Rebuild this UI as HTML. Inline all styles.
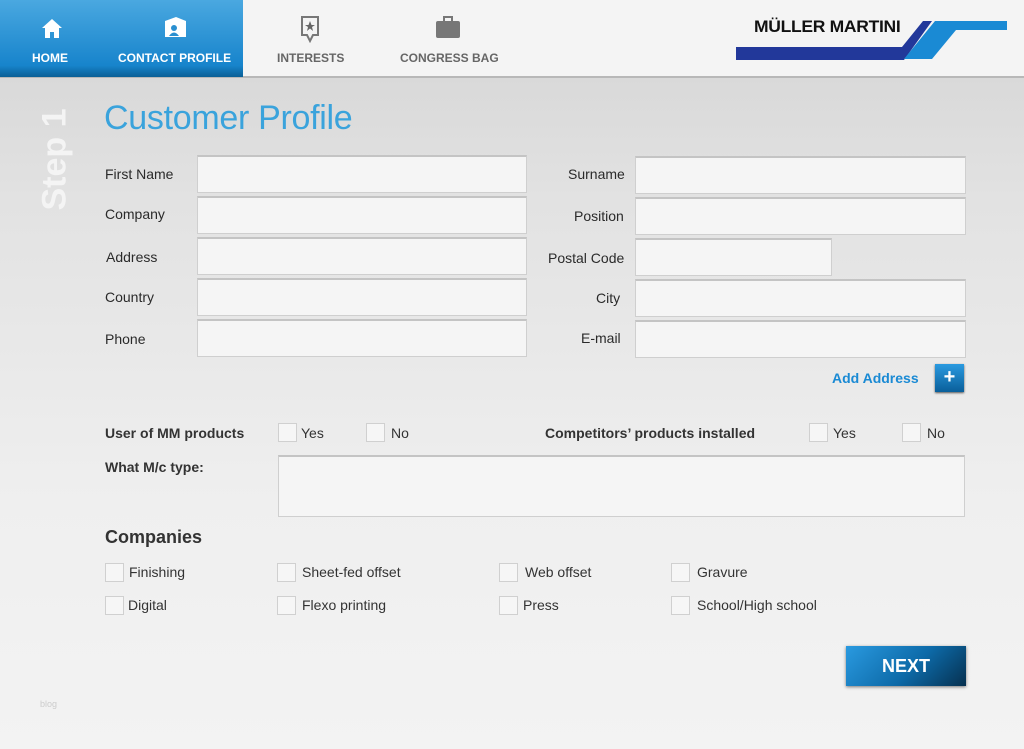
<!DOCTYPE html>
<html><head><meta charset="utf-8"><style>
*{margin:0;padding:0;box-sizing:border-box}
body{width:1024px;height:749px;overflow:hidden;font-family:"Liberation Sans",sans-serif;background:linear-gradient(#d9d9d9 78px,#e2e2e2 200px,#efefef 500px,#f3f3f3);position:relative;color:#222}
.hdr{position:absolute;left:0;top:0;width:1024px;height:78px;background:#f4f4f4;border-bottom:2px solid #b8b8b8}
.blue{position:absolute;left:0;top:0;width:243px;height:77px;background:linear-gradient(#4aa8e0,#1784cc 85%,#0a5f96)}
.tab{position:absolute;top:51px;font-size:12px;font-weight:bold;text-align:center}
.w{color:#fff}.g{color:#666}
.a{position:absolute}
.lbl{position:absolute;font-size:14px;color:#2a2a2a}
.in{position:absolute;background:#f5f5f5;border:1px solid #cfcfcf;border-top:2px solid #c4c4c4;height:38px}
.cb{position:absolute;width:19px;height:19px;background:#f6f6f6;border:1px solid #d0d0d0}
.t{position:absolute;font-size:14px;color:#333}
.b{font-weight:bold}
</style></head><body>
<div class="hdr"></div>
<div class="blue"></div>
<svg class="a" style="left:40px;top:16px" width="24" height="24" viewBox="0 0 24 24"><path d="M2 12L12 3L22 12H19V22H14V16H10V22H5V12Z" fill="#fff"/></svg>
<div class="tab w" style="left:32px">HOME</div>
<svg class="a" style="left:162px;top:15px" width="26" height="26" viewBox="0 0 26 26"><path d="M3 6L14 2L24 6V22H3Z" fill="#fff"/><circle cx="12" cy="13" r="3" fill="#2a8fd0"/><path d="M7 21Q12 14 17 21Z" fill="#2a8fd0"/></svg>
<div class="tab w" style="left:118px">CONTACT PROFILE</div>
<svg class="a" style="left:300px;top:15px" width="20" height="28" viewBox="0 0 20 28"><path d="M2 2H18V20H13L10 26L7 20H2Z" fill="none" stroke="#777" stroke-width="2"/><path d="M10 6L11.5 10H15L12 12L13 16L10 13.5L7 16L8 12L5 10H8.5Z" fill="#666"/></svg>
<div class="tab g" style="left:277px">INTERESTS</div>
<svg class="a" style="left:435px;top:16px" width="26" height="24" viewBox="0 0 26 24"><rect x="1" y="5" width="24" height="17" rx="2" fill="#777"/><rect x="9" y="1" width="8" height="5" fill="none" stroke="#777" stroke-width="2"/></svg>
<div class="tab g" style="left:400px">CONGRESS BAG</div>
<div class="a b" style="left:754px;top:17px;font-size:17px;color:#111;letter-spacing:-0.3px;transform:scaleX(1.03);transform-origin:left">MÜLLER MARTINI</div>
<svg class="a" style="left:736px;top:20px" width="272" height="40" viewBox="0 0 272 40"><path d="M0 27H166L187 1H196L168 40H0Z" fill="#22389a"/><path d="M199 1H271V10H220L196 39H168Z" fill="#1a8ad4"/></svg>
<div class="a b" style="left:25px;top:100px;width:50px;height:120px">
<div style="position:absolute;left:-30px;top:40px;width:120px;transform:rotate(-90deg);font-size:34px;color:#f4f4f4;text-align:center">Step 1</div></div>
<div class="a" style="left:104px;top:99px;font-size:34px;color:#3aa3dc;letter-spacing:-0.3px">Customer Profile</div>
<div class="lbl" style="left:105px;top:166px">First Name</div>
<div class="lbl" style="left:105px;top:206px">Company</div>
<div class="lbl" style="left:106px;top:249px">Address</div>
<div class="lbl" style="left:105px;top:289px">Country</div>
<div class="lbl" style="left:105px;top:331px">Phone</div>
<div class="in" style="left:197px;top:155px;width:330px"></div>
<div class="in" style="left:197px;top:196px;width:330px"></div>
<div class="in" style="left:197px;top:237px;width:330px"></div>
<div class="in" style="left:197px;top:278px;width:330px"></div>
<div class="in" style="left:197px;top:319px;width:330px"></div>
<div class="lbl" style="left:568px;top:166px">Surname</div>
<div class="lbl" style="left:574px;top:208px">Position</div>
<div class="lbl" style="left:548px;top:250px">Postal Code</div>
<div class="lbl" style="left:596px;top:290px">City</div>
<div class="lbl" style="left:581px;top:330px">E-mail</div>
<div class="in" style="left:635px;top:156px;width:331px"></div>
<div class="in" style="left:635px;top:197px;width:331px"></div>
<div class="in" style="left:635px;top:238px;width:197px"></div>
<div class="in" style="left:635px;top:279px;width:331px"></div>
<div class="in" style="left:635px;top:320px;width:331px"></div>
<div class="a b" style="left:832px;top:370px;font-size:14px;color:#1a8ad4">Add Address</div>
<div class="a" style="left:935px;top:364px;width:29px;height:28px;background:linear-gradient(#2a9ae0,#0a5f9a);box-shadow:0 1px 2px #555;color:#fff;font-weight:bold;font-size:20px;text-align:center;line-height:27px">+</div>
<div class="t b" style="left:105px;top:425px">User of MM products</div>
<div class="cb" style="left:278px;top:423px"></div><div class="t" style="left:301px;top:425px">Yes</div>
<div class="cb" style="left:366px;top:423px"></div><div class="t" style="left:391px;top:425px">No</div>
<div class="t b" style="left:545px;top:425px">Competitors’ products installed</div>
<div class="cb" style="left:809px;top:423px"></div><div class="t" style="left:833px;top:425px">Yes</div>
<div class="cb" style="left:902px;top:423px"></div><div class="t" style="left:927px;top:425px">No</div>
<div class="t b" style="left:105px;top:459px">What M/c type:</div>
<div class="in" style="left:278px;top:455px;width:687px;height:62px"></div>
<div class="a b" style="left:105px;top:527px;font-size:18px;color:#333">Companies</div>
<div class="cb" style="left:105px;top:563px"></div><div class="t" style="left:129px;top:564px">Finishing</div>
<div class="cb" style="left:277px;top:563px"></div><div class="t" style="left:302px;top:564px">Sheet-fed offset</div>
<div class="cb" style="left:499px;top:563px"></div><div class="t" style="left:525px;top:564px">Web offset</div>
<div class="cb" style="left:671px;top:563px"></div><div class="t" style="left:697px;top:564px">Gravure</div>
<div class="cb" style="left:105px;top:596px"></div><div class="t" style="left:128px;top:597px">Digital</div>
<div class="cb" style="left:277px;top:596px"></div><div class="t" style="left:302px;top:597px">Flexo printing</div>
<div class="cb" style="left:499px;top:596px"></div><div class="t" style="left:523px;top:597px">Press</div>
<div class="cb" style="left:671px;top:596px"></div><div class="t" style="left:697px;top:597px">School/High school</div>
<div class="a b" style="left:846px;top:646px;width:120px;height:40px;background:linear-gradient(135deg,#2a9ae0,#0d6aa8 55%,#06304f);box-shadow:0 1px 3px #777;color:#fff;font-size:18px;text-align:center;line-height:40px">NEXT</div>
<div class="a" style="left:40px;top:699px;font-size:9px;color:#ccc">blog</div>
</body></html>
